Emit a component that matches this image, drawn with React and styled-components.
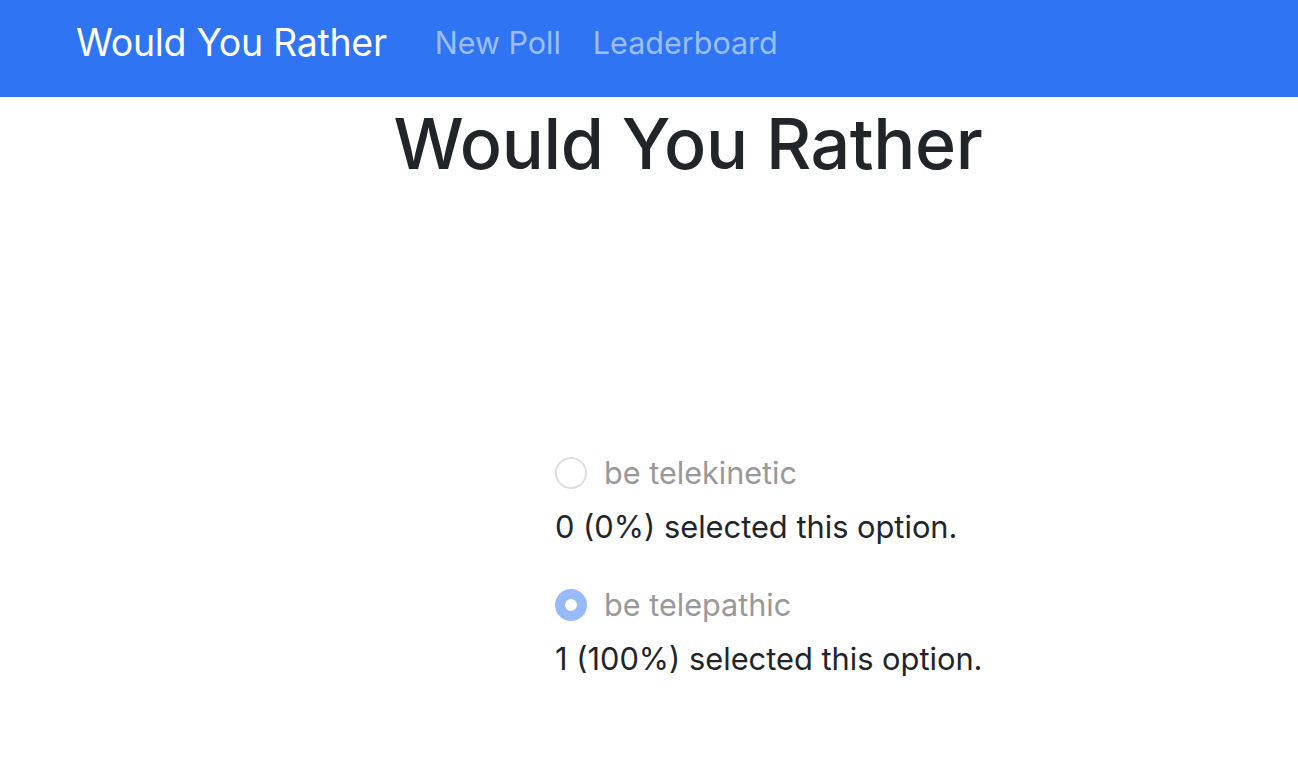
import React from 'react'
import styled, { createGlobalStyle } from 'styled-components'

const GlobalStyle = createGlobalStyle`
  body {
    margin: 0;
    font-family: Inter, "Liberation Sans", sans-serif;
    color: #212529;
    background: #fff;
  }
`;

const options = [
  { id: 'a', text: 'be telekinetic', votes: 0, percent: 0, chosen: false },
  { id: 'b', text: 'be telepathic', votes: 1, percent: 100, chosen: true },
];

const App = () => {
  return (
    <>
      <GlobalStyle />
      <NavStyled>
        <Brand>Would You Rather</Brand>
        <NavLink>New Poll</NavLink>
        <NavLink>Leaderboard</NavLink>
      </NavStyled>
      <Title>Would You Rather</Title>
      <PollStyled>
        {options.map((option) => (
          <Option key={option.id}>
            <RadioRow>
              <Radio $checked={option.chosen} />
              <RadioLabel>{option.text}</RadioLabel>
            </RadioRow>
            <Result>
              {option.votes} ({option.percent}%) selected this option.
            </Result>
          </Option>
        ))}
      </PollStyled>
    </>
  )
}

const NavStyled = styled.nav`
  display: flex;
  align-items: center;
  height: 97px;
  padding: 0 0 0 76px;
  background: #2e74f3;
`;

const Brand = styled.a`
  color: #fff;
  font-size: 37.5px;
  letter-spacing: -0.3px;
  margin-right: 33px;
  padding-bottom: 12px;
`;

const NavLink = styled.a`
  color: rgba(255, 255, 255, 0.55);
  font-size: 30.5px;
  padding: 0 15px 12px 15px;
  & + & {
    margin-left: 2px;
  }
`;

const Title = styled.h1`
  margin: 5px 0 0 0;
  padding-left: 78px;
  text-align: center;
  font-size: 70px;
  font-weight: 500;
  letter-spacing: -0.4px;
  line-height: 1.2;
`;

const PollStyled = styled.div`
  display: flex;
  flex-direction: column;
  gap: 41px;
  margin-top: 268px;
  padding-left: 555px;
`;

const Option = styled.div`
  display: flex;
  flex-direction: column;
  gap: 17px;
`;

const RadioRow = styled.div`
  display: flex;
  align-items: center;
  gap: 17px;
`;

const Radio = styled.span`
  box-sizing: border-box;
  width: 32px;
  height: 32px;
  border-radius: 50%;
  border: ${(p) => (p.$checked ? '10px solid #98b9fa' : '2px solid #dedede')};
  background: #fff;
`;

const RadioLabel = styled.span`
  color: #999;
  font-size: 30.6px;
`;

const Result = styled.div`
  font-size: 30.8px;
`;

export default App
